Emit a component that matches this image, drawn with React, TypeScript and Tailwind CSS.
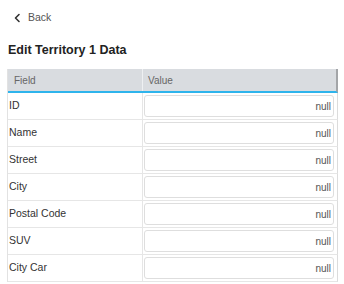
import React from "react";

const rows = ["ID", "Name", "Street", "City", "Postal Code", "SUV", "City Car"];

const BackLink = () => (
  <button className="flex items-center h-9 pl-[13px] gap-[7px] text-[#555] text-[10.5px] cursor-pointer">
    <svg width="8" height="10" viewBox="0 0 8 10" fill="none">
      <polyline points="6,1.5 2.5,5 6,8.5" stroke="#333" strokeWidth="1.6" strokeLinecap="round" strokeLinejoin="round" />
    </svg>
    <span>Back</span>
  </button>
);

export default function App() {
  return (
    <div
      className="w-[344px] h-[284px] bg-white overflow-hidden"
      style={{ fontFamily: '"Liberation Sans", Arial, sans-serif' }}
    >
      <BackLink />

      {/* Title */}
      <div className="h-[28px] flex items-center px-2 text-[12.5px] font-bold text-[#222]">
        Edit Territory 1 Data
      </div>

      {/* Table */}
      <div className="ml-[7px] mt-[5px] w-[331px] border-l border-[#e2e2e2]">
        <div className="grid grid-cols-[135px_1fr] h-[24px] bg-[#d9dce0] border-b-2 border-[#2eb4ec] border-r-2 border-r-[#a3a5a8] text-[10px] text-[#666]">
          <div className="flex items-center pl-[6px] border-r border-[#eef0f2]">Field</div>
          <div className="flex items-center pl-[5px]">Value</div>
        </div>
        {rows.map((label) => (
          <div
            key={label}
            className="grid grid-cols-[135px_1fr] h-[27px] border-b border-[#e6e6e6] border-r border-r-[#dcdcdc] text-[10.5px] text-[#333]"
          >
            <div className="flex items-center pl-[1px] border-r border-[#e6e6e6]">{label}</div>
            <div className="flex items-center pl-[1px] pr-[3px]">
              <div className="w-full h-[22px] flex items-center justify-end pr-[2px] border border-[#dedede] rounded-[3px] text-[10px] text-[#555]">
                null
              </div>
            </div>
          </div>
        ))}
      </div>
    </div>
  );
}
